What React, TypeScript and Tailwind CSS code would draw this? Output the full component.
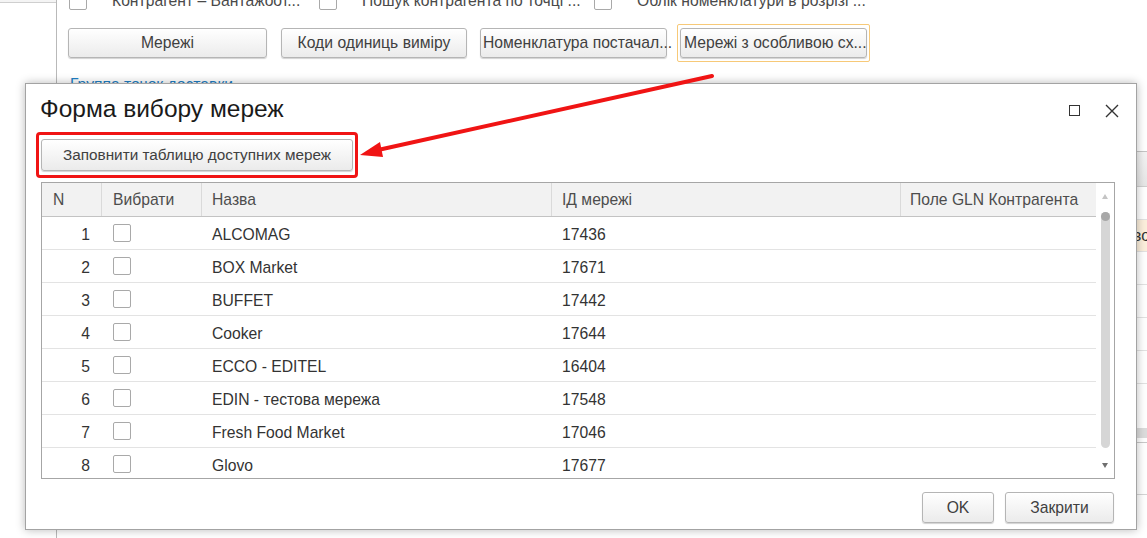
import React from "react";

const rows = [
  { n: 1, name: "ALCOMAG", id: "17436" },
  { n: 2, name: "BOX Market", id: "17671" },
  { n: 3, name: "BUFFET", id: "17442" },
  { n: 4, name: "Cooker", id: "17644" },
  { n: 5, name: "ECCO - EDITEL", id: "16404" },
  { n: 6, name: "EDIN - тестова мережа", id: "17548" },
  { n: 7, name: "Fresh Food Market", id: "17046" },
  { n: 8, name: "Glovo", id: "17677" },
];

const btn =
  "flex items-center justify-center rounded-[3px] border border-[#b5b5b5] bg-gradient-to-b from-white to-[#ebebeb] shadow-[0_1px_1px_rgba(0,0,0,0.18)] text-[#404040] whitespace-nowrap";

function Checkbox({ className = "" }: { className?: string }) {
  return <div className={"h-[18px] w-[18px] shrink-0 rounded-[2px] border border-[#a9a9a9] bg-white " + className} />;
}

function Background() {
  return (
    <div className="flex h-full">
      {/* ліва панель */}
      <div className="w-[57px] shrink-0 border-r border-[#b9b9b9]">
        <div className="h-[3px] border-b border-[#cfcfcf] bg-[#f4f4f4]" />
      </div>

      <div className="flex flex-1 flex-col pl-[12px] text-[15.7px] text-[#4a4a4a]">
        {/* прапорці */}
        <div className="-mt-[8px] flex h-[18px] items-center leading-[18px]">
          <div className="flex w-[250px] items-center gap-[25px]">
            <Checkbox />
            <span>Контрагент – Вантажоот...</span>
          </div>
          <div className="flex w-[275px] items-center gap-[25px]">
            <Checkbox />
            <span>Пошук контрагента по точці ...</span>
          </div>
          <div className="flex items-center gap-[25px]">
            <Checkbox />
            <span>Облік номенклатури в розрізі ...</span>
          </div>
        </div>

        {/* кнопки */}
        <div className="mt-[14px] flex items-center text-[15.7px]">
          <div className={btn + " ml-[-1px] h-[30px] w-[199px]"}>Мережі</div>
          <div className={btn + " ml-[14px] h-[30px] w-[186px]"}>Коди одиниць виміру</div>
          <div className={btn + " ml-[13px] h-[30px] w-[187px] justify-start pl-[2px]"}>Номенклатура постачал...</div>
          <div className="ml-[10px] rounded-[2px] border border-[#f7c978] px-[2px] py-[3px]">
            <div className={btn + " h-[30px] w-[187px] justify-start pl-[3px]"}>Мережі з особливою сх...</div>
          </div>
        </div>

        <div className="mt-[14px] pl-[1px] leading-[18px] text-[#1f7fc4] underline">Группа точок доставки</div>

        {/* таблиця за діалогом */}
        <div className="ml-[900px] mt-[57px] w-[300px] border-t border-[#c4c4c4] text-[#333]">
          <div className="h-[35px] border-b border-[#cfcfcf] bg-gradient-to-b from-[#f3f3f3] to-[#e6e6e6]" />
          <div className="h-[33px] border-b border-[#e2e2e2]" />
          <div className="flex h-[32px] items-center border-b border-[#e2e2e2] bg-[#fcefdc] pl-[164px]">вода</div>
          <div className="h-[33px] border-b border-[#e2e2e2]" />
          <div className="h-[33px] border-b border-[#e2e2e2]" />
          <div className="h-[33px] border-b border-[#e2e2e2]" />
          <div className="h-[33px] border-b border-[#e2e2e2]" />
          <div className="h-[44px]" />
          <div className="h-[10px] bg-[#dcdcdc]" />
          <div className="h-[5px] border-b border-[#c9c9c9]" />
          <div className="h-[52px] border-b border-[#d5d5d5]" />
        </div>

        <div className="mt-[33px] flex">
          <div className="ml-[264px] w-[262px] border-t-2 border-[#a7a7a7]" />
          <div className="ml-[362px] w-[172px] border-t-2 border-[#a7a7a7]" />
        </div>
      </div>
    </div>
  );
}

function Dialog() {
  return (
    <div className="absolute left-[25px] top-[83px] flex h-[447px] w-[1112px] flex-col border border-[#a3a3a3] bg-white shadow-[0_0_9px_rgba(0,0,0,0.28)]">
      {/* заголовок */}
      <div className="flex h-[48px] items-start pl-[14px] pr-[17px] pt-[11px]">
        <div className="text-[24.5px] leading-[27px] text-[#1a1a1a]">Форма вибору мереж</div>
        <div className="ml-auto mt-[9px] flex items-start gap-[25px]">
          <div className="mt-[1px] h-[11px] w-[11px] border-[1.5px] border-[#333]" />
          <svg width="14" height="14" viewBox="0 0 14 14" className="block">
            <path d="M1 1 L13 13 M13 1 L1 13" stroke="#333" strokeWidth="1.4" />
          </svg>
        </div>
      </div>

      {/* кнопка в червоній рамці */}
      <div className="ml-[10px] flex h-[46px] w-[322px] items-center rounded-[4px] border-[3px] border-[#f01414] px-[2px]">
        <div className={btn + " h-[32px] w-full text-[15.3px]"}>Заповнити таблицю доступних мереж</div>
      </div>

      {/* таблиця */}
      <div className="ml-[15px] mt-[4px] flex h-[297px] w-[1074px] overflow-hidden border border-[#a6a6a6] text-[15.7px]">
        <div className="flex-1">
          <div className="grid h-[34px] grid-cols-[59px_100px_350px_349px_1fr] border-b border-[#c3c3c3] bg-[#f2f2f2] text-[#4d4d4d]">
            <div className="flex items-center pl-[11px]">N</div>
            <div className="flex items-center border-l border-[#dadada] pl-[11px]">Вибрати</div>
            <div className="flex items-center border-l border-[#dadada] pl-[10px]">Назва</div>
            <div className="flex items-center border-l border-[#dadada] pl-[10px]">ІД мережі</div>
            <div className="flex items-center border-l border-[#dadada] pl-[9px]">Поле GLN Контрагента</div>
          </div>
          {rows.map((r) => (
            <div
              key={r.n}
              className="grid h-[33px] shrink-0 grid-cols-[59px_100px_350px_349px_1fr] border-b border-[#e3e3e3] text-[#333]"
            >
              <div className="flex items-center justify-end pr-[11px] pt-[4px]">{r.n}</div>
              <div className="flex items-center pl-[12px]">
                <Checkbox />
              </div>
              <div className="flex items-center pl-[11px] pt-[4px]">{r.name}</div>
              <div className="flex items-center pl-[11px] pt-[4px]">{r.id}</div>
              <div />
            </div>
          ))}
        </div>

        {/* прокрутка */}
        <div className="flex w-[18px] shrink-0 flex-col items-center bg-white">
          <svg width="6" height="5" viewBox="0 0 6 5" className="mt-[11px] block">
            <path d="M3 0 L6 5 L0 5 Z" fill="#c4c4c4" />
          </svg>
          <div className="mt-[13px] h-[236px] w-[9px] rounded-full bg-[#d6d6d6]">
            <div className="h-[9px] w-[9px] rounded-full bg-[#a8a8a8]" />
          </div>
          <svg width="6" height="5" viewBox="0 0 6 5" className="mt-[15px] block">
            <path d="M0 0 L6 0 L3 5 Z" fill="#6f6f6f" />
          </svg>
        </div>
      </div>

      {/* кнопки внизу */}
      <div className="mt-[13px] flex justify-end gap-[11px] pr-[22px] text-[15.7px]">
        <div className={btn + " h-[31px] w-[72px]"}>OK</div>
        <div className={btn + " h-[31px] w-[109px]"}>Закрити</div>
      </div>
    </div>
  );
}

export default function App() {
  return (
    <div className="relative h-[538px] w-[1147px] overflow-hidden bg-white font-['Liberation_Sans',Arial,sans-serif]">
      <Background />
      <Dialog />
      {/* червона стрілка */}
      <svg className="pointer-events-none absolute left-0 top-0" width="1147" height="538">
        <line x1="712" y1="76" x2="378" y2="150" stroke="#f01414" strokeWidth="4" strokeLinecap="round" />
        <polygon points="360,155 380,142 383,157" fill="#f01414" />
      </svg>
    </div>
  );
}
